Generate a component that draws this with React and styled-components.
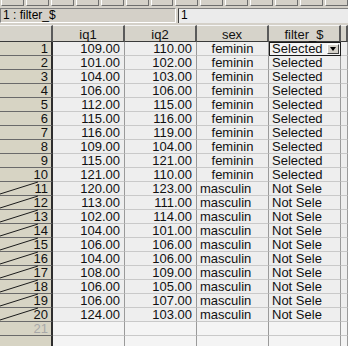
import React from "react";
import styled, { createGlobalStyle } from "styled-components";

const Global = createGlobalStyle`
  body {
    margin: 0;
    background: #d4d0c8;
    font-family: "Liberation Sans", Arial, sans-serif;
  }
`;

const Window = styled.div`
  width: 348px;
  height: 346px;
  overflow: hidden;
  background: #d4d0c8;
`;

const Toolbar = styled.div`
  display: flex;
  gap: 2px;
  height: 7px;
  padding-left: 1px;
  overflow: hidden;
`;

const ToolButton = styled.div`
  width: 24px;
  height: 5px;
  background: #d4d0c8;
  border-right: 1px solid #6e6e6e;
  border-bottom: 1px solid #6e6e6e;
  border-left: 1px solid #ffffff;
`;

const EditBar = styled.div`
  display: flex;
  gap: 2px;
  height: 15px;
  margin-top: 1px;
`;

const CellRef = styled.div`
  width: 176px;
  box-sizing: border-box;
  border-top: 1px solid #808080;
  border-left: 1px solid #808080;
  border-bottom: 1px solid #ffffff;
  border-right: 1px solid #ffffff;
  font-size: 12px;
  line-height: 13px;
  padding-left: 2px;
  color: #000;
`;

const CellValue = styled.div`
  flex: 1;
  box-sizing: border-box;
  background: #ebebeb;
  border-top: 1px solid #808080;
  border-left: 1px solid #404040;
  font-size: 12px;
  line-height: 13px;
  padding-left: 2px;
`;

const Grid = styled.div`
  display: grid;
  grid-template-columns: 53px repeat(4, 72px) 1fr;
  grid-template-rows: 17px;
  grid-auto-rows: 14px;
  margin-top: 2px;
  font-size: 13px;
  line-height: 13px;
  color: #111;
`;

const ColHead = styled.div`
  box-sizing: border-box;
  background: #d6d3ca;
  border-top: 1px solid #f4f4f4;
  border-right: 2px solid #5a5a5a;
  border-bottom: 1px solid #3a3a3a;
  text-align: center;
  padding-top: 2px;
`;

const RowHead = styled.div`
  position: relative;
  box-sizing: border-box;
  background: #d7d4c4;
  border-right: 2px solid #2e2e2e;
  border-bottom: 1px solid #6a6a6a;
  text-align: right;
  padding-right: 3px;
  color: ${(p) => (p.$empty ? "#a8a8a8" : "#111")};
`;

const Strike = styled.svg`
  position: absolute;
  left: 0;
  top: 0;
  width: 40px;
  height: 13px;
  overflow: visible;
`;

const Cell = styled.div`
  box-sizing: border-box;
  background: ${(p) => (p.$empty ? "#f4f4f4" : "#eeeeee")};
  border-right: 1px solid #9a9a9a;
  border-bottom: 1px solid #c9c9c9;
  text-align: ${(p) => p.$align || "left"};
  padding: 0 ${(p) => (p.$align === "right" ? "4px" : "0")} 0 ${(p) =>
      p.$align === "left" ? "3px" : "0"};
  white-space: nowrap;
  overflow: hidden;
`;

const Dropdown = styled.div`
  display: flex;
  box-sizing: border-box;
  height: 14px;
  border: 1px solid #1a1a1a;
  background: #f4f4f4;
  padding-left: 2px;
  line-height: 12px;
  white-space: nowrap;
  overflow: hidden;
`;

const DropLabel = styled.span`
  flex: 1;
`;

const DropButton = styled.span`
  box-sizing: border-box;
  width: 12px;
  height: 10px;
  margin: 1px;
  background: #d4d0c8;
  border-right: 1px solid #404040;
  border-bottom: 1px solid #404040;
  border-top: 1px solid #fff;
  border-left: 1px solid #fff;
  display: flex;
  align-items: center;
  justify-content: center;

  &::after {
    content: "";
    border-left: 3px solid transparent;
    border-right: 3px solid transparent;
    border-top: 4px solid #000;
  }
`;

const rows = [
  [109, 110, "feminin", "Selected"],
  [101, 102, "feminin", "Selected"],
  [104, 103, "feminin", "Selected"],
  [106, 106, "feminin", "Selected"],
  [112, 115, "feminin", "Selected"],
  [115, 116, "feminin", "Selected"],
  [116, 119, "feminin", "Selected"],
  [109, 104, "feminin", "Selected"],
  [115, 121, "feminin", "Selected"],
  [121, 110, "feminin", "Selected"],
  [120, 123, "masculin", "Not Sele"],
  [113, 111, "masculin", "Not Sele"],
  [102, 114, "masculin", "Not Sele"],
  [104, 101, "masculin", "Not Sele"],
  [106, 106, "masculin", "Not Sele"],
  [104, 106, "masculin", "Not Sele"],
  [108, 109, "masculin", "Not Sele"],
  [106, 105, "masculin", "Not Sele"],
  [106, 107, "masculin", "Not Sele"],
  [124, 103, "masculin", "Not Sele"],
];

export default function App() {
  return (
    <Window>
      <Global />
      <Toolbar>
        {Array.from({ length: 14 }).map((_, i) => (
          <ToolButton key={i} />
        ))}
      </Toolbar>
      <EditBar>
        <CellRef>1 : filter_$</CellRef>
        <CellValue>1</CellValue>
      </EditBar>
      <Grid>
        <ColHead />
        <ColHead>iq1</ColHead>
        <ColHead>iq2</ColHead>
        <ColHead>sex</ColHead>
        <ColHead>filter_$</ColHead>
        <ColHead />
        {rows.map((r, i) => (
          <React.Fragment key={i}>
            <RowHead>
              {i >= 10 && (
                <Strike viewBox="0 0 40 13">
                  <line x1="0" y1="12" x2="38" y2="0" stroke="#1a1a1a" strokeWidth="1" />
                </Strike>
              )}
              {i + 1}
            </RowHead>
            <Cell $align="right">{r[0].toFixed(2)}</Cell>
            <Cell $align="right">{r[1].toFixed(2)}</Cell>
            <Cell $align={i < 10 ? "center" : "left"}>{r[2]}</Cell>
            {i === 0 ? (
              <Dropdown>
                <DropLabel>{r[3]}</DropLabel>
                <DropButton />
              </Dropdown>
            ) : (
              <Cell $align="left">{r[3]}</Cell>
            )}
            <Cell />
          </React.Fragment>
        ))}
        <RowHead $empty>21</RowHead>
        <Cell $empty />
        <Cell $empty />
        <Cell $empty />
        <Cell $empty />
        <Cell $empty />
        <RowHead $empty />
        <Cell $empty />
        <Cell $empty />
        <Cell $empty />
        <Cell $empty />
        <Cell $empty />
      </Grid>
    </Window>
  );
}
